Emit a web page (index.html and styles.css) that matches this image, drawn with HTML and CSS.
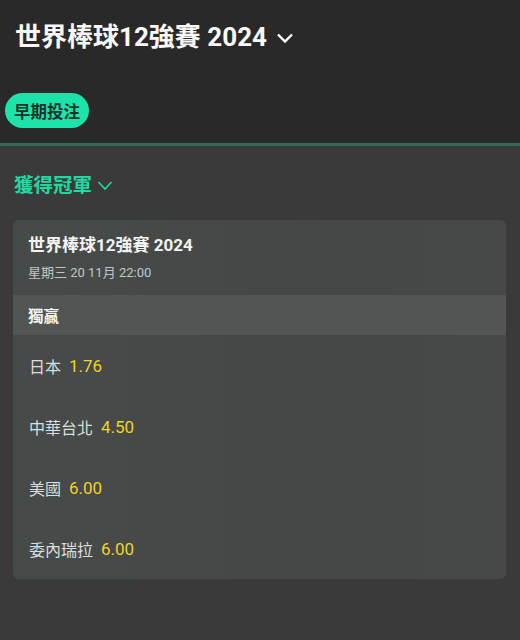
FILE: index.html
```html
<!DOCTYPE html>
<html lang="zh-Hant">
<head>
<meta charset="utf-8">
<link rel="stylesheet" href="styles.css">
</head>
<body>
<header class="top">
  <h1 class="title">世界棒球12強賽 2024
    <svg class="title-chev" width="18" height="12" viewBox="0 0 18 12"><path d="M2 2.5 L9 9.5 L16 2.5" fill="none" stroke="#fff" stroke-width="2.4"/></svg>
  </h1>
  <div class="tabs"><span class="pill">早期投注</span></div>
</header>
<main class="content">
  <h2 class="market">獲得冠軍
    <svg class="market-chev" width="16" height="11" viewBox="0 0 16 11"><path d="M1.5 2 L8 9 L14.5 2" fill="none" stroke="#1fd9a2" stroke-width="1.6"/></svg>
  </h2>
  <section class="card">
    <div class="card-head">
      <div class="card-title">世界棒球12強賽 2024</div>
      <div class="card-date">星期三 20 11月 22:00</div>
    </div>
    <div class="band">獨贏</div>
    <div class="row"><span class="name">日本</span><span class="odds">1.76</span></div>
    <div class="row"><span class="name">中華台北</span><span class="odds">4.50</span></div>
    <div class="row"><span class="name">美國</span><span class="odds">6.00</span></div>
    <div class="row"><span class="name">委內瑞拉</span><span class="odds">6.00</span></div>
  </section>
</main>
</body>
</html>
```
FILE: styles.css
```css
* { box-sizing: border-box; }
html, body { margin: 0; padding: 0; }
body {
  background: #3a3a3a;
  font-family: Roboto, "Noto Sans CJK TC", sans-serif;
  width: 520px;
  height: 640px;
  overflow: hidden;
}
.top {
  background: #292929;
  padding: 19px 0 15px 0;
  border-bottom: 3px solid #2f6b57;
}
.title {
  margin: 0 0 0 15px;
  font-size: 26px;
  font-weight: 700;
  line-height: 36px;
  color: #fafafa;
  display: flex;
  align-items: center;
  gap: 9px;
}
.title-chev { margin-top: 2px; }
.tabs {
  margin-top: 38px;
  padding-left: 5px;
  display: flex;
}
.pill {
  display: inline-flex;
  align-items: center;
  height: 35px;
  padding: 0 9px;
  border-radius: 18px;
  background: #1ee3a9;
  color: #17332a;
  font-size: 16.5px;
  font-weight: 700;
}
.content {
  padding: 23px 14px 0 13px;
}
.market {
  margin: 0 0 0 1px;
  height: 28px;
  display: flex;
  align-items: center;
  gap: 5px;
  font-size: 19.5px;
  font-weight: 700;
  color: #1fd9a2;
}
.market-chev { margin-top: 5px; }
.card {
  margin-top: 23px;
  border-radius: 6px;
  background: linear-gradient(90deg, #464b49 0%, #454746 60%, #474948 100%);
  overflow: hidden;
}
.card-head {
  padding: 13px 15px 13px 15px;
}
.card-title {
  font-size: 17px;
  font-weight: 700;
  line-height: 24px;
  color: #f4f4f4;
}
.card-date {
  margin-top: 7px;
  font-size: 13px;
  line-height: 18px;
  color: #c4c6c5;
}
.band {
  height: 40px;
  display: flex;
  align-items: center;
  padding-left: 15px;
  background: #515654;
  font-size: 15.5px;
  font-weight: 700;
  color: #f2f2f2;
}
.row {
  height: 61px;
  display: flex;
  align-items: center;
  gap: 8px;
  padding-left: 16px;
  font-size: 16px;
}
.name { color: #dcdedd; }
.odds { color: #f3d324; font-size: 17px; }
```
